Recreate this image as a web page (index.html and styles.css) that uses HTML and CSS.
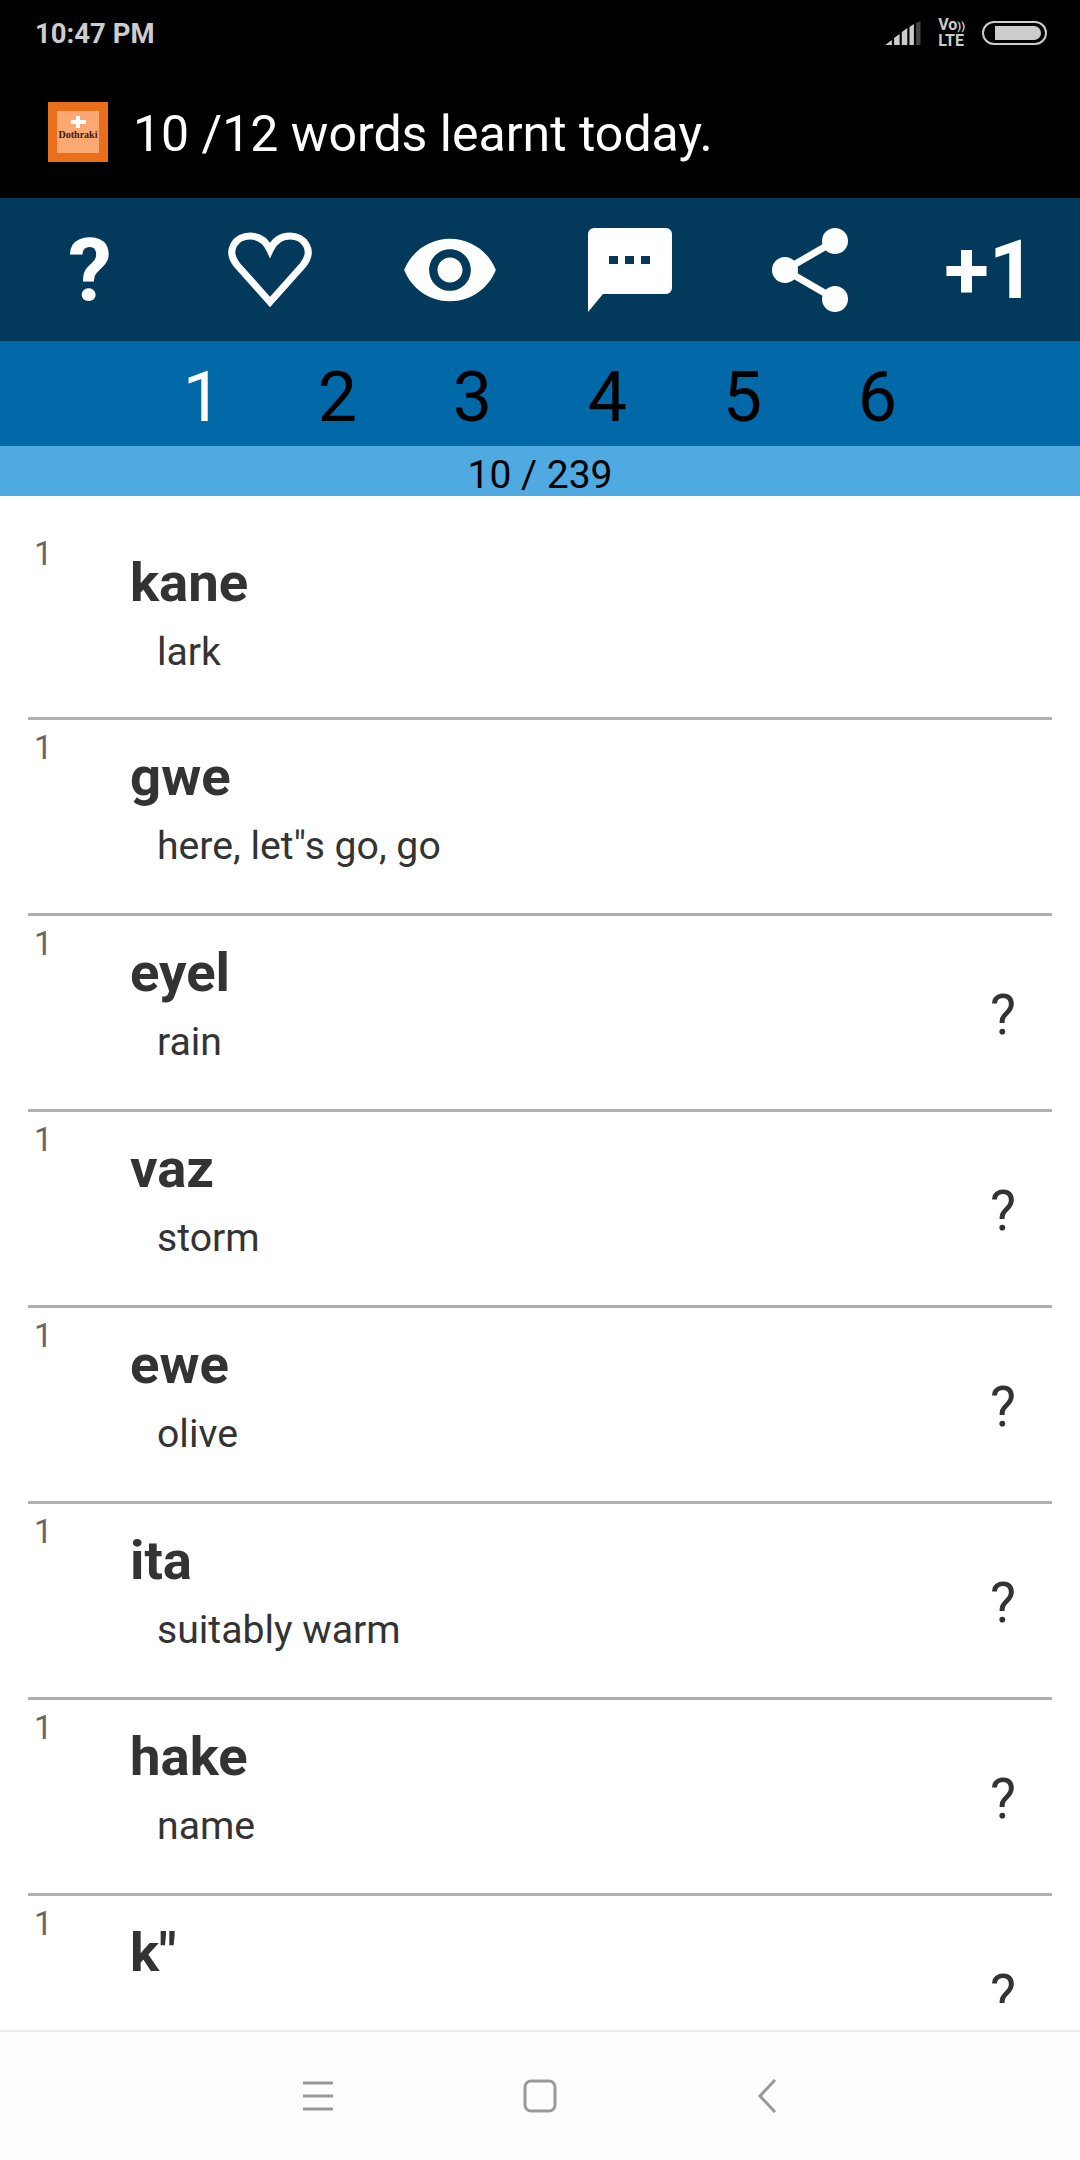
FILE: index.html
```html
<!DOCTYPE html>
<html lang="en">

<head>
  <meta charset="UTF-8">
  <meta name="viewport" content="width=device-width, initial-scale=1.0">
  <title>Dothraki</title>
  <link rel="stylesheet" href="styles.css">
</head>

<body>
  <div class="page">

    <!-- status bar -->
    <div class="status-bar">
      <span class="status-time">10:47 PM</span>
      <div class="status-icons">
        <svg class="signal" width="34" height="24" viewBox="0 0 34 24">
          <path fill="#ccc" d="M0 24 L6 19 V24 Z M8 17 L13 13 V24 H8 Z M15 11 L20 7 V24 H15 Z M22 6 L26 3 V24 H22 Z"/>
          <path fill="#444" d="M28 2 L32 0 V24 H28 Z"/>
        </svg>
        <div class="volte"><span>Vo<small>))</small></span><span>LTE</span></div>
        <div class="battery"><div class="battery-fill"></div></div>
      </div>
    </div>

    <!-- title -->
    <div class="title-bar">
      <div class="app-logo">
        <div class="app-logo-inner">
          <span class="app-logo-plus"></span>
          <span class="app-logo-name">Dothraki</span>
        </div>
      </div>
      <h1 class="title-text">10 /12 words learnt today.</h1>
    </div>

    <!-- actions -->
    <div class="toolbar">
      <div class="tool tool-text">?</div>
      <div class="tool">
        <svg width="84" height="76" viewBox="0 0 84 76">
          <path fill="none" stroke="#fff" stroke-width="7" d="M42 70 L9 33 C-3 18 8 4 22 4 C31 4 38 9 42 18 C46 9 53 4 62 4 C76 4 87 18 75 33 Z"/>
        </svg>
      </div>
      <div class="tool">
        <svg width="100" height="100" viewBox="0 0 24 24">
          <path fill="#fff" d="M12 4.5C7 4.5 2.73 7.61 1 12c1.73 4.39 6 7.5 11 7.5s9.27-3.11 11-7.5c-1.73-4.39-6-7.5-11-7.5zM12 17c-2.76 0-5-2.24-5-5s2.24-5 5-5 5 2.24 5 5-2.24 5-5 5zm0-8c-1.66 0-3 1.34-3 3s1.34 3 3 3 3-1.34 3-3-1.34-3-3-3z"/>
        </svg>
      </div>
      <div class="tool">
        <svg width="84" height="84" viewBox="0 0 84 84">
          <path fill="#fff" d="M6 0 H78 A6 6 0 0 1 84 6 V60 A6 6 0 0 1 78 66 H15 L0 84 V6 A6 6 0 0 1 6 0 Z"/>
          <path fill="#033a5c" d="M21 28 H30 V36 H21 Z M37 28 H46 V36 H37 Z M53 28 H62 V36 H53 Z"/>
        </svg>
      </div>
      <div class="tool">
        <svg width="76" height="84" viewBox="0 0 76 84">
          <path fill="none" stroke="#fff" stroke-width="7" d="M63 13 L13 42 L63 71"/>
          <circle cx="63" cy="13" r="13" fill="#fff"/>
          <circle cx="13" cy="42" r="13" fill="#fff"/>
          <circle cx="63" cy="71" r="13" fill="#fff"/>
        </svg>
      </div>
      <div class="tool tool-text tool-plus">+1</div>
    </div>

    <!-- levels -->
    <div class="levels">
      <span class="level active">1</span>
      <span class="level">2</span>
      <span class="level">3</span>
      <span class="level">4</span>
      <span class="level">5</span>
      <span class="level">6</span>
    </div>

    <div class="progress">10 / 239</div>

    <!-- word list -->
    <div class="word-list">
      <div class="word-row">
        <span class="word-rank">1</span>
        <div class="word-body">
          <div class="word-name">kane</div>
          <div class="word-meaning">lark</div>
        </div>
      </div>
      <div class="word-row">
        <span class="word-rank">1</span>
        <div class="word-body">
          <div class="word-name">gwe</div>
          <div class="word-meaning">here, let"s go, go</div>
        </div>
      </div>
      <div class="word-row">
        <span class="word-rank">1</span>
        <div class="word-body">
          <div class="word-name">eyel</div>
          <div class="word-meaning">rain</div>
        </div>
        <span class="word-mark">?</span>
      </div>
      <div class="word-row">
        <span class="word-rank">1</span>
        <div class="word-body">
          <div class="word-name">vaz</div>
          <div class="word-meaning">storm</div>
        </div>
        <span class="word-mark">?</span>
      </div>
      <div class="word-row">
        <span class="word-rank">1</span>
        <div class="word-body">
          <div class="word-name">ewe</div>
          <div class="word-meaning">olive</div>
        </div>
        <span class="word-mark">?</span>
      </div>
      <div class="word-row">
        <span class="word-rank">1</span>
        <div class="word-body">
          <div class="word-name">ita</div>
          <div class="word-meaning">suitably warm</div>
        </div>
        <span class="word-mark">?</span>
      </div>
      <div class="word-row">
        <span class="word-rank">1</span>
        <div class="word-body">
          <div class="word-name">hake</div>
          <div class="word-meaning">name</div>
        </div>
        <span class="word-mark">?</span>
      </div>
      <div class="word-row">
        <span class="word-rank">1</span>
        <div class="word-body">
          <div class="word-name">k"</div>
        </div>
        <span class="word-mark">?</span>
      </div>
    </div>

    <!-- system nav -->
    <div class="nav-bar">
      <div class="nav-item nav-menu">
        <svg width="32" height="30" viewBox="0 0 32 30">
          <path stroke="#999" stroke-width="3" d="M1 2 H31 M1 15 H31 M1 28 H31"/>
        </svg>
      </div>
      <div class="nav-item">
        <svg width="34" height="34" viewBox="0 0 34 34">
          <rect x="2" y="2" width="30" height="30" rx="6" fill="none" stroke="#999" stroke-width="3"/>
        </svg>
      </div>
      <div class="nav-item nav-back">
        <svg width="20" height="34" viewBox="0 0 20 34">
          <path fill="none" stroke="#999" stroke-width="3" d="M18 1 L3 17 L18 33"/>
        </svg>
      </div>
    </div>

  </div>
</body>

</html>
```

FILE: styles.css
```css
* {
  margin: 0;
  padding: 0;
  box-sizing: border-box;
}

body {
  background: #fff;
  font-family: Roboto, "Liberation Sans", sans-serif;
}

.page {
  display: flex;
  flex-direction: column;
  width: 1080px;
  height: 2160px;
  overflow: hidden;
}

/* status bar */
.status-bar {
  display: flex;
  align-items: center;
  justify-content: space-between;
  height: 66px;
  padding: 0 33px 0 35px;
  background: #000;
  color: #ccc;
}

.status-time {
  font-size: 27.5px;
  font-weight: 700;
}

.status-icons {
  display: flex;
  align-items: center;
  gap: 17px;
}

.signal {
  transform: scaleX(1.1);
}

.volte {
  display: flex;
  flex-direction: column;
  font-size: 16px;
  font-weight: 700;
  line-height: 14px;
}

.volte small {
  font-size: 11px;
}

.battery {
  width: 65px;
  height: 24px;
  padding: 3px 4px 3px 11px;
  border: 2px solid #ccc;
  border-radius: 12px;
}

.battery-fill {
  height: 100%;
  border-radius: 0 7px 7px 0;
  background: #ccc;
}

/* title */
.title-bar {
  display: flex;
  align-items: center;
  gap: 25px;
  height: 132px;
  padding-left: 48px;
  background: #000;
}

.app-logo {
  width: 60px;
  height: 60px;
  padding: 9px;
  background: #ea6f1c;
}

.app-logo-inner {
  display: flex;
  flex-direction: column;
  align-items: center;
  height: 100%;
  background: #fba873;
}

.app-logo-plus {
  width: 15px;
  height: 12px;
  margin-top: 5px;
  background: linear-gradient(#fff, #fff) center / 100% 4px no-repeat,
    linear-gradient(#fff, #fff) center / 4px 100% no-repeat;
}

.app-logo-name {
  font-family: "Liberation Serif", serif;
  font-size: 10px;
  font-weight: 700;
  line-height: 13px;
  color: #3a1a08;
}

.title-text {
  padding-top: 4px;
  font-size: 50px;
  font-weight: 400;
  color: #fff;
}

/* actions */
.toolbar {
  display: flex;
  height: 143px;
  background: #033a5c;
}

.tool {
  display: flex;
  flex: 1;
  align-items: center;
  justify-content: center;
}

.tool-text {
  font-size: 88px;
  font-weight: 700;
  color: #fff;
}

.tool-plus {
  font-size: 82px;
}

/* levels */
.levels {
  display: flex;
  justify-content: center;
  height: 105px;
  background: #0269a9;
}

.level {
  width: 135px;
  font-size: 70px;
  line-height: 113px;
  text-align: center;
  color: #000;
}

.level.active {
  color: #fff;
}

.progress {
  height: 50px;
  font-size: 39px;
  line-height: 58px;
  text-align: center;
  color: #000;
  background: #4eaae0;
}

/* word list */
.word-list {
  flex: 1;
  margin-bottom: 27px;
  padding-top: 30px;
  overflow: hidden;
}

.word-row {
  display: flex;
  align-items: center;
  height: 196px;
  margin: 0 28px;
  border-bottom: 3px solid #b0b0b0;
}

.word-row:first-child {
  height: 194px;
}

.word-rank {
  align-self: flex-start;
  width: 102px;
  padding: 8px 0 0 6px;
  font-size: 33px;
  line-height: 40px;
  color: #666;
}

.word-name {
  font-size: 54.5px;
  font-weight: 700;
  line-height: 64px;
  color: #333;
}

.word-meaning {
  margin-top: 15px;
  padding-left: 27px;
  font-size: 39.2px;
  line-height: 46px;
  color: #333;
}

.word-body {
  flex: 1;
  align-self: flex-start;
  padding-top: 24px;
}

.word-mark {
  width: 50px;
  margin: 4px 12px 0 0;
  font-size: 55px;
  color: #333;
}

/* system nav */
.nav-bar {
  display: flex;
  align-items: center;
  justify-content: center;
  height: 130px;
  border-top: 2px solid #eaeaea;
  background: #fdfdfd;
}

.nav-item {
  display: flex;
  justify-content: center;
  width: 224px;
}

.nav-menu {
  padding-left: 4px;
}

.nav-back {
  padding-left: 6px;
}
```
